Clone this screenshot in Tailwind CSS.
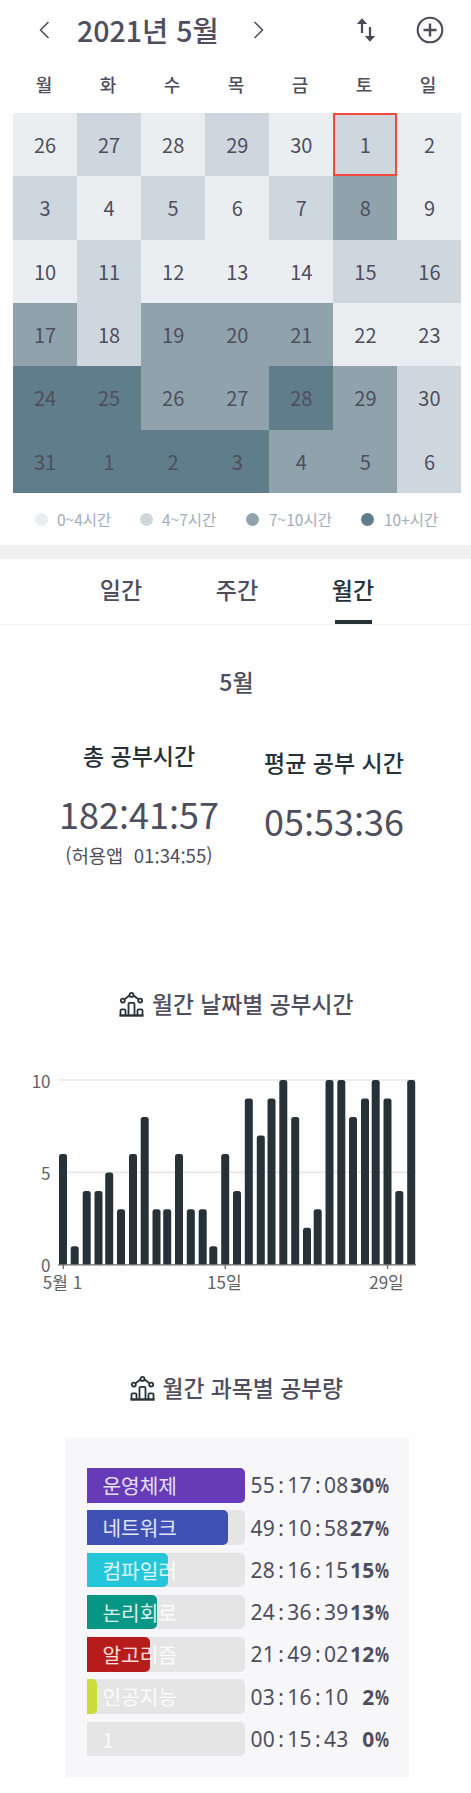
<!DOCTYPE html>
<html lang="ko">
<head>
    <meta charset="UTF-8">
    <meta name="viewport" content="width=device-width, initial-scale=1.0">
    <script src="https://cdn.jsdelivr.net/npm/@tailwindcss/browser@4"></script>
    <title>월간 공부시간</title>
</head>
<body class="bg-[#fefefe] font-['Noto_Sans_CJK_KR',sans-serif] text-[#4f4e5e] w-[471px] h-[1793px] overflow-hidden">

    <!-- calendar -->
    <header class="flex items-center h-[60px] pl-[39px]">
        <svg class="w-[11px] h-[18px]" viewBox="0 0 11 18" fill="none" stroke="#4b4a5a" stroke-width="1.5"><path d="M9.5 1 1.5 9l8 8"/></svg>
        <h1 class="w-[142px] ml-[27px] text-[28.5px] leading-[60px] font-medium whitespace-nowrap">2021년 5월</h1>
        <svg class="w-[11px] h-[18px] ml-[34px]" viewBox="0 0 11 18" fill="none" stroke="#4b4a5a" stroke-width="1.5"><path d="m1.5 1 8 8-8 8"/></svg>
        <svg class="w-[20px] h-[24px] ml-[92px]" viewBox="0 0 20 24"><path d="M6 4v11M14 9v11" stroke="#4b4a5a" stroke-width="2.2"/><path d="M.8 6 6 .3 11.2 6zM8.8 18l5.2 5.7 5.2-5.7z" fill="#4b4a5a"/></svg>
        <svg class="w-[28px] h-[28px] ml-[40px]" viewBox="0 0 28 28" fill="none" stroke="#4b4a5a" stroke-width="2.1"><circle cx="14" cy="14" r="12.3"/><path d="M14 7.5v13M7.5 14h13" stroke-width="2.4"/></svg>
    </header>
    <div class="grid grid-cols-7 w-[448px] ml-[12px] h-[53px] text-center text-[18px] leading-[48px] font-medium">
        <span>월</span><span>화</span><span>수</span><span>목</span><span>금</span><span>토</span><span>일</span>
    </div>
    <div id="calendar" class="grid grid-cols-7 grid-rows-6 w-[448.5px] h-[380px] ml-[13px] text-center text-[20px] leading-[64.5px]"></div>
    <div class="flex items-center h-[52px] pl-[35px] text-[15.5px] leading-[52px] text-[#a3adba] whitespace-nowrap">
        <i class="w-[13px] h-[13px] rounded-full bg-[#eaeef1]"></i><span class="w-[92px] ml-[9px]">0~4시간</span>
        <i class="w-[13px] h-[13px] -ml-[9px] rounded-full bg-[#cfd8dd]"></i><span class="w-[92px] ml-[9px]">4~7시간</span>
        <i class="w-[13px] h-[13px] -ml-[8px] rounded-full bg-[#90a3ac]"></i><span class="w-[102px] ml-[10px]">7~10시간</span>
        <i class="w-[13px] h-[13px] -ml-[10px] rounded-full bg-[#607d8b]"></i><span class="ml-[10px]">10+시간</span>
    </div>
    <div class="h-[14px] bg-[#f1f1f2]"></div>

    <!-- tabs -->
    <nav class="flex h-[66px] border-b border-[#f1f1f2] pl-[63px] text-center text-[23px] leading-[60px] font-medium">
        <span class="w-[116px]">일간</span>
        <span class="w-[116px]">주간</span>
        <span class="w-[116px] flex flex-col items-center justify-between text-[#273238]">월간<b class="block w-[37px] h-[4px] shrink-0 bg-[#273238]"></b></span>
    </nav>

    <!-- totals -->
    <h2 class="h-[96px] pt-[38px] pl-[2px] text-center text-[23px] leading-[36px] font-medium">5월</h2>
    <div class="flex h-[220px] text-center whitespace-nowrap">
        <div class="w-[190px] ml-[44px]">
            <h3 class="h-[36px] mt-[15.5px] text-[23px] leading-[36px] font-medium text-[#273238]">총 공부시간</h3>
            <p class="mt-[15px] text-[36px] leading-[50px]">182<span class="inline-block translate-y-[3px]">:</span>41<span class="inline-block translate-y-[3px]">:</span>57</p>
            <p class="text-[18.7px] leading-[33px] whitespace-pre">(허용앱  01<span class="inline-block translate-y-[1.5px]">:</span>34<span class="inline-block translate-y-[1.5px]">:</span>55)</p>
        </div>
        <div class="w-[190px] ml-[5px]">
            <h3 class="h-[36px] mt-[22.5px] text-[23px] leading-[36px] font-medium text-[#273238]">평균 공부 시간</h3>
            <p class="mt-[15px] text-[36px] leading-[50px]">05<span class="inline-block translate-y-[3px]">:</span>53<span class="inline-block translate-y-[3px]">:</span>36</p>
        </div>
    </div>

    <!-- hours per day -->
    <section class="h-[429px] pt-[45px]">
        <h2 class="flex items-center h-[36px] pl-[119px] text-[22.8px] leading-[36px] font-medium whitespace-nowrap">
            <svg class="w-[25px] h-[25px] mr-[8px]" viewBox="0 0 25 25" fill="none" stroke="#273238" stroke-width="1.8"><path d="M.5 23.5h24" stroke-width="2.4"/><path d="M1.5 23.5v-5q0-1.2 1.2-1.2h2.6q1.2 0 1.2 1.2v5M9.5 23.5V12q0-1.2 1.2-1.2h3.6q1.2 0 1.2 1.2v11.5M18.5 23.5v-5q0-1.2 1.2-1.2h2.6q1.2 0 1.2 1.2v5M5.5 7.2l5-3.6M19.5 7.2l-5-3.6"/><circle cx="12.5" cy="2.9" r="2"/><circle cx="3.8" cy="8.6" r="2"/><circle cx="21.2" cy="8.6" r="2"/></svg>
            월간 날짜별 공부시간
        </h2>
        <svg id="chart" class="block w-[471px] h-[250px] mt-[38px]" viewBox="0 0 471 250">
            <path d="M58 20h358M58 112.4h358" stroke="#e8e8e9" stroke-width="1.6"/>
            <g id="bars" fill="#273238"></g>
            <path d="M58 204.8h358M63.3 204v5M225.3 204v5M387.5 204v5" stroke="#6b6c70" stroke-width="1.3"/>
            <g font-size="17" fill="#626265">
                <text x="50.5" y="27.8" text-anchor="end">10</text>
                <text x="50.5" y="120.3" text-anchor="end">5</text>
                <text x="50.5" y="212" text-anchor="end">0</text>
                <text x="62.5" y="228.6" text-anchor="middle">5월 1</text>
                <text x="224.3" y="228.6" text-anchor="middle">15일</text>
                <text x="386.5" y="228.6" text-anchor="middle">29일</text>
            </g>
        </svg>
    </section>

    <!-- hours per subject -->
    <section>
        <h2 class="flex items-center h-[36px] pl-[129.5px] text-[22.8px] leading-[36px] font-medium whitespace-nowrap">
            <svg class="w-[25px] h-[25px] mr-[8px]" viewBox="0 0 25 25" fill="none" stroke="#273238" stroke-width="1.8"><path d="M.5 23.5h24" stroke-width="2.4"/><path d="M1.5 23.5v-5q0-1.2 1.2-1.2h2.6q1.2 0 1.2 1.2v5M9.5 23.5V12q0-1.2 1.2-1.2h3.6q1.2 0 1.2 1.2v11.5M18.5 23.5v-5q0-1.2 1.2-1.2h2.6q1.2 0 1.2 1.2v5M5.5 7.2l5-3.6M19.5 7.2l-5-3.6"/><circle cx="12.5" cy="2.9" r="2"/><circle cx="3.8" cy="8.6" r="2"/><circle cx="21.2" cy="8.6" r="2"/></svg>
            월간 과목별 공부량
        </h2>
        <div id="subjects" class="w-[344px] h-[339px] ml-[65px] mt-[31.5px] pt-[30.5px] pl-[21.5px] bg-[#f7f7f9]"></div>
    </section>

    <script>
        const shades = ["bg-[#eaeef1]", "bg-[#cfd7de]", "bg-[#90a3ac]", "bg-[#607d8b]"];
        const days = [26,27,28,29,30, ...Array.from({length: 31}, (_, i) => i + 1), 1,2,3,4,5,6];
        const levels = "0101010" + "1010120" + "0100011" + "2122200" + "3322321" + "3333221";
        document.getElementById("calendar").innerHTML = days.map((d, i) =>
            `<div class="${shades[levels[i]]} ${i == 5 ? "border-2 border-[#f44a3e] leading-[60px]" : ""}">${d}</div>`).join("");

        const hours = [6,1,4,4,5,3,6,8,3,3,6,3,3,1,6,4,9,7,9,10,8,2,3,10,10,8,9,10,9,4,10];
        const centers = [63,74.7,86.7,98.5,109.2,121,133,144.7,156.5,167.2,179,190.8,202.7,213.3,225.2,237,248.8,260.8,271.5,283.3,295.2,307,317.7,329.5,341.3,353,365,375.7,387.5,399.3,411.2];
        document.getElementById("bars").innerHTML = hours.map((h, i) => {
            const y = 204.8 - h * 18.48;
            return `<path d="M${centers[i] - 4} 204.8V${y + 2.5}q0-2.5 2.5-2.5h3q2.5 0 2.5 2.5V204.8z"/>`;
        }).join("");

        const subjects = [
            ["운영체제", "55:17:08", "30", 158.5, "bg-[#673ab7]"],
            ["네트워크", "49:10:58", "27", 141, "bg-[#3f51b5]"],
            ["컴파일러", "28:16:15", "15", 81.3, "bg-[#26c6da]"],
            ["논리회로", "24:36:39", "13", 70.7, "bg-[#089786]"],
            ["알고리즘", "21:49:02", "12", 63, "bg-[#b71c1c]"],
            ["인공지능", "03:16:10", "2", 10, "bg-[#cddc39]"],
            ["1", "00:15:43", "0", 0, "bg-transparent"],
        ];
        // every character sits in a cell of the same width
        const cells = s => [...s].map(c => `<span class="w-[12.25px] text-center">${c}</span>`).join("");
        document.getElementById("subjects").innerHTML = subjects.map(([name, time, pct, w, color]) => `
            <div class="flex items-center h-[34.5px] mb-[7.75px] font-['Noto_Sans',sans-serif] text-[21px] leading-[34px]">
                <div class="relative w-[158.5px] h-[34.5px] rounded-r-[5px] bg-[#e5e5e5]">
                    <div class="h-full rounded-r-[5px] ${color}" style="width:${w}px"></div>
                    <span class="absolute left-[16px] top-0 font-['Noto_Sans_CJK_KR',sans-serif] text-[20.2px] leading-[36px] text-white/85">${name}</span>
                </div>
                <div class="flex ml-[5.5px]">${cells(time)}</div>
                <div class="flex justify-end w-[39.5px] font-bold">${cells(pct)}<span class="w-[13.5px]"><span class="inline-block origin-left scale-x-[0.74]">%</span></span></div>
            </div>`).join("");
    </script>
</body>
</html>
